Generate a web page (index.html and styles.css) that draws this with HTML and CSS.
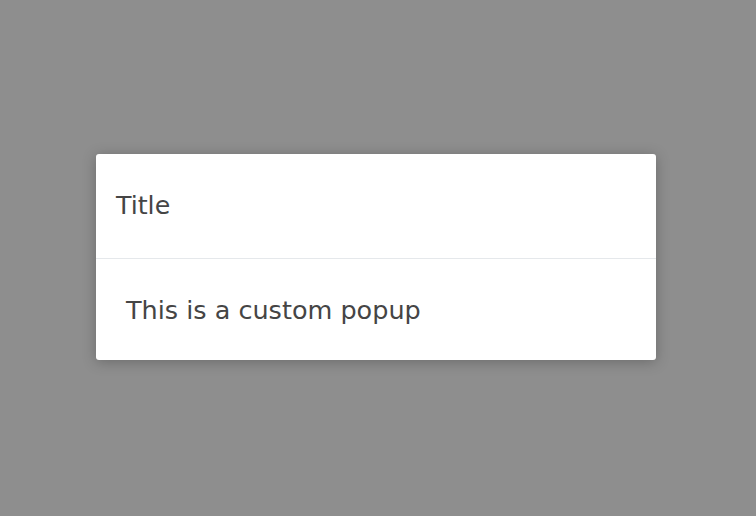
FILE: index.html
```html
<!DOCTYPE html>
<html>
<head>
<meta charset="utf-8">
<link rel="stylesheet" href="styles.css">
</head>
<body>
<div class="overlay">
  <div class="popup">
    <div class="popup-header">Title</div>
    <div class="popup-body">This is a custom popup</div>
  </div>
</div>
</body>
</html>
```
FILE: styles.css
```css
html, body {
  margin: 0;
  padding: 0;
  height: 100%;
}
body {
  background: #8e8e8e;
  font-family: "DejaVu Sans", Verdana, sans-serif;
  color: #454545;
}
.overlay {
  padding: 154px 100px 0 96px;
}
.popup {
  width: 560px;
  background: #fff;
  border-radius: 3px;
  box-shadow: 0 2px 14px rgba(0, 0, 0, 0.25);
  overflow: hidden;
}
.popup-header {
  height: 105px;
  box-sizing: border-box;
  display: flex;
  align-items: center;
  padding: 0 20px 1px;
  font-size: 25.3px;
  border-bottom: 1px solid #e5e8eb;
}
.popup-body {
  height: 101px;
  display: flex;
  align-items: center;
  padding: 0 30px;
  font-size: 25.5px;
}
```
